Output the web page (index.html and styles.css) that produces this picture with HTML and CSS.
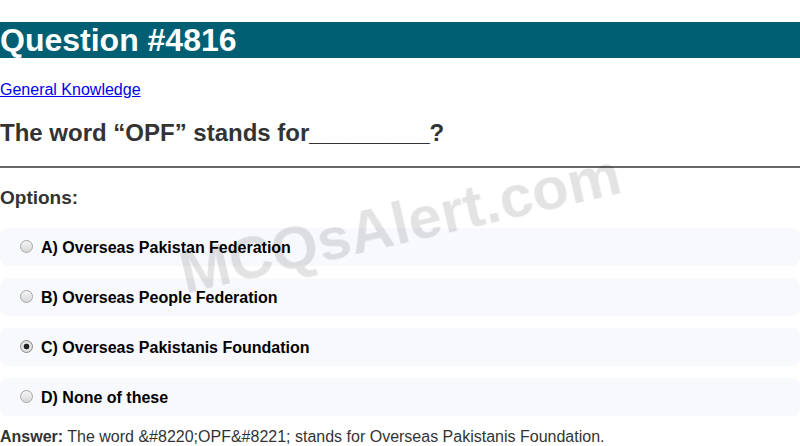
FILE: index.html
```html
<!DOCTYPE html>
<html>
<head>
<meta charset="utf-8">
<link rel="stylesheet" href="styles.css">
</head>
<body>
<h1 class="title">Question #4816</h1>
<p class="cat"><a href="#">General Knowledge</a></p>
<h2 class="question">The word “OPF” stands for_________?</h2>
<hr class="divider">
<h3 class="opt-head">Options:</h3>
<div class="options">
  <label class="option"><input class="radio" type="radio" name="q"><span>A) Overseas Pakistan Federation</span></label>
  <label class="option"><input class="radio" type="radio" name="q"><span>B) Overseas People Federation</span></label>
  <label class="option"><input class="radio" type="radio" name="q" checked><span>C) Overseas Pakistanis Foundation</span></label>
  <label class="option"><input class="radio" type="radio" name="q"><span>D) None of these</span></label>
</div>
<p class="answer"><strong>Answer:</strong> The word &amp;#8220;OPF&amp;#8221; stands for Overseas Pakistanis Foundation.</p>
<div class="watermark">MCQsAlert.com</div>
</body>
</html>
```
FILE: styles.css
```css
html, body { margin: 0; padding: 0; }
body {
  font-family: "Liberation Sans", Arial, sans-serif;
  color: #333;
  background: #fff;
  overflow: hidden;
}
.title {
  margin: 22px 0 0 0;
  background: #005f73;
  color: #fff;
  font-size: 32px;
  line-height: 36px;
  font-weight: bold;
}
.cat {
  margin: 23px 0 0 0;
  font-size: 16px;
  line-height: 18px;
}
.cat a { color: #0000ee; }
.question {
  margin: 20px 0 0 0;
  font-size: 24px;
  line-height: 28px;
  font-weight: bold;
}
.divider {
  margin: 19px 0 0 0;
  border: 0;
  border-top: 2px solid #666;
  height: 0;
}
.opt-head {
  margin: 19px 0 0 0;
  font-size: 19px;
  line-height: 22px;
  font-weight: bold;
}
.options {
  display: flex;
  flex-direction: column;
  gap: 12px;
  margin-top: 19px;
}
.option {
  display: flex;
  align-items: center;
  height: 38px;
  box-sizing: border-box;
  background: #f8f9fc;
  border-radius: 8px;
  padding: 2px 15px 0 20px;
  font-size: 16px;
  line-height: 18px;
  font-weight: bold;
  color: #000;
}
.radio {
  appearance: none;
  -webkit-appearance: none;
  width: 13px;
  height: 13px;
  margin: 0 8px 0 0;
  border-radius: 50%;
  border: 1px solid #a6a6a6;
  box-sizing: border-box;
  background: linear-gradient(#f4f4f4, #d8d8d8);
  position: relative;
  top: -2px;
}
.radio:checked {
  background: radial-gradient(circle, #222 0 2.6px, #e8e8e8 3.2px, #d0d0d0 100%);
  border-color: #8a8a8a;
}
.answer {
  margin: 12px 0 0 0;
  font-size: 16px;
  line-height: 18px;
}
.answer strong { color: #333; }
.watermark {
  position: fixed;
  left: 50%;
  top: 50%;
  transform: translate(-50%, -50%) rotate(-13deg);
  font-size: 60px;
  font-weight: bold;
  color: rgba(0, 0, 0, 0.11);
  white-space: nowrap;
  pointer-events: none;
}
```
